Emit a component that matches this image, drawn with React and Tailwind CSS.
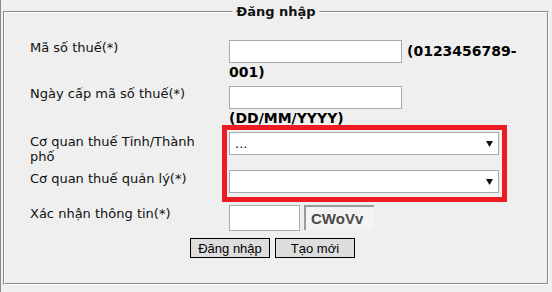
import React from "react";

function Arrow() {
  return (
    <svg width="7" height="6" viewBox="0 0 7 6" className="shrink-0">
      <polygon points="0,0 7,0 3.5,6" fill="#111" />
    </svg>
  );
}

function Select({ value }) {
  return (
    <div className="w-[270px] h-[23px] bg-white border border-[#a9a9a9] flex items-center justify-between pl-[5px] pr-[5px] text-[13px] text-[#111]">
      <span className="leading-[15px]">{value}</span>
      <Arrow />
    </div>
  );
}

export default function App() {
  return (
    <div className="w-[552px] h-[292px] bg-[#efefef] relative overflow-hidden border-l border-[#8a8a8a] font-['DejaVu_Sans',sans-serif] text-[13px] leading-[15px] text-[#111]">
      <div className="pt-[11px] pl-[2px]">
        <div className="relative w-[546px] h-[274px] border border-t-[#8a8a8a] border-l-[#8a8a8a] border-b-[#fbfbfb] border-r-[#fbfbfb]">
          <div className="h-full border border-t-[#fbfbfb] border-l-[#fbfbfb] border-b-[#8a8a8a] border-r-[#8a8a8a]">
            <div className="absolute top-[-8px] left-1/2 -translate-x-1/2 px-[4px] bg-[#efefef] font-bold text-[13px] leading-[15px] whitespace-nowrap">
              Đăng nhập
            </div>
            <div className="pt-[27px] pl-[25px]">
              {/* Row 1 */}
              <div className="flex">
                <div className="w-[180px] mr-[19px]">Mã số thuế(*)</div>
                <div className="flex flex-col">
                  <div className="flex items-center">
                    <div className="w-[173px] h-[23px] bg-white border border-[#a9a9a9]" />
                    <span className="ml-[5px] font-bold text-[14px] leading-[17px] text-black">(0123456789-</span>
                  </div>
                  <div className="mt-[1px] font-bold text-[14px] leading-[16px] text-black">001)</div>
                </div>
              </div>
              {/* Row 2 */}
              <div className="flex mt-[6px]">
                <div className="w-[180px] mr-[19px]">Ngày cấp mã số thuế(*)</div>
                <div className="flex flex-col">
                  <div className="w-[173px] h-[23px] bg-white border border-[#a9a9a9]" />
                  <div className="mt-[1px] font-bold text-[14px] leading-[16px] text-black">(DD/MM/YYYY)</div>
                </div>
              </div>
              {/* Row 3 */}
              <div className="flex mt-[6px]">
                <div className="w-[180px] mr-[19px] pt-[2px]">Cơ quan thuế Tỉnh/Thành phố</div>
                <Select value="..." />
              </div>
              {/* Row 4 */}
              <div className="flex mt-[6px]">
                <div className="w-[180px] mr-[19px] pt-[1px]">Cơ quan thuế quản lý(*)</div>
                <Select value="" />
              </div>
              {/* Row 5 */}
              <div className="flex mt-[12px]">
                <div className="w-[180px] mr-[19px] pt-[1px]">Xác nhận thông tin(*)</div>
                <div className="flex items-start">
                  <div className="w-[71px] h-[26px] bg-white border border-[#a9a9a9]" />
                  <div className="ml-[4px] w-[70px] h-[25px] bg-[#f3f3f3] border-t-2 border-l-2 border-[#9a9a9a] flex items-center pl-[5px] font-['Liberation_Sans',sans-serif] font-bold text-[15px] text-[#4a4a4a]">
                    CWoVv
                  </div>
                </div>
              </div>
              {/* Buttons */}
              <div className="flex mt-[7px] ml-[160px] gap-[5px] font-['Liberation_Sans',sans-serif] text-[13px]">
                <button className="w-[80px] h-[20px] border border-black bg-[#dddddd] text-black flex items-center justify-center leading-[15px]">
                  Đăng nhập
                </button>
                <button className="w-[80px] h-[20px] border border-black bg-[#dddddd] text-black flex items-center justify-center leading-[15px]">
                  Tạo mới
                </button>
              </div>
            </div>
          </div>
        </div>
      </div>
      <div className="absolute left-[221px] top-[125px] w-[285px] h-[77px] border-[5px] border-[#ed1c24] pointer-events-none" />
    </div>
  );
}
